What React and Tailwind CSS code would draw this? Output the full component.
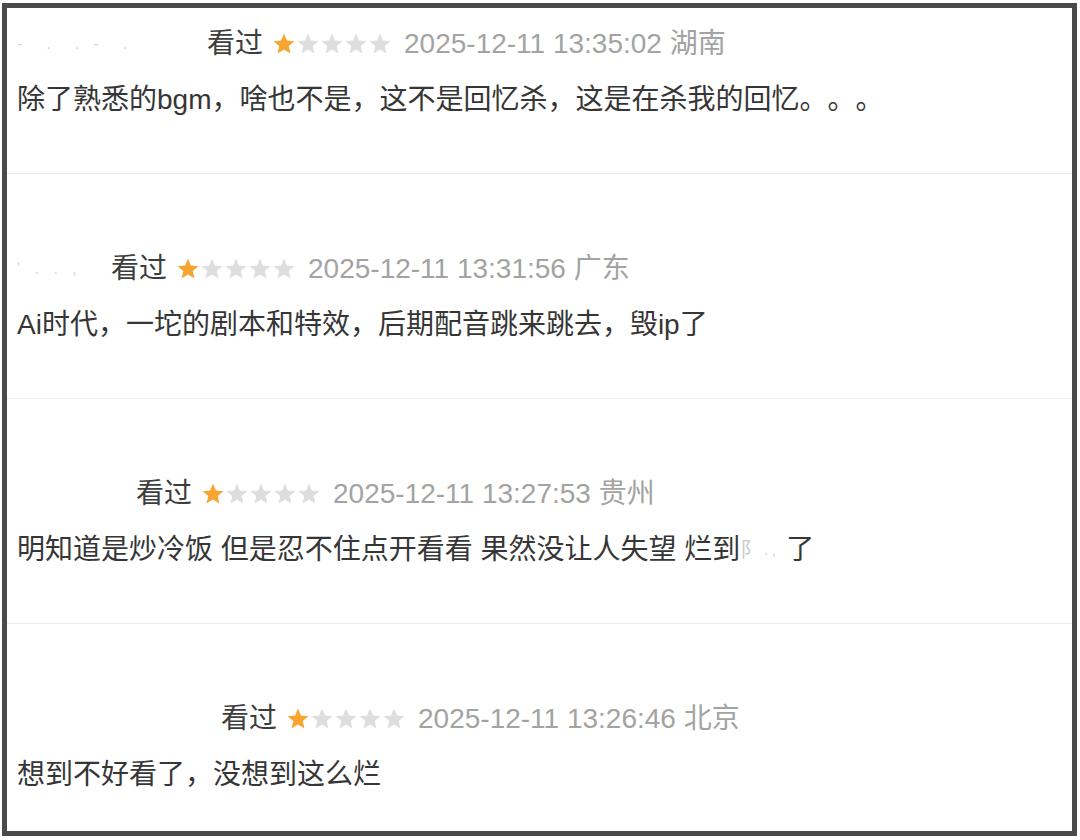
import React from "react";

// one-star review rows, usernames are blurred out in the source
const reviews = [
  {
    nameWidth: "w-[190px]",
    nameMarks: "-  .  . -  .",
    time: "2025-12-11 13:35:02",
    region: "湖南",
    text: "除了熟悉的bgm，啥也不是，这不是回忆杀，这是在杀我的回忆。。。",
    first: true,
  },
  {
    nameWidth: "w-[94px]",
    nameMarks: "' . . ,",
    time: "2025-12-11 13:31:56",
    region: "广东",
    text: "Ai时代，一坨的剧本和特效，后期配音跳来跳去，毁ip了",
  },
  {
    nameWidth: "w-[119px]",
    nameMarks: "",
    time: "2025-12-11 13:27:53",
    region: "贵州",
    text: null,
  },
  {
    nameWidth: "w-[204px]",
    nameMarks: "",
    time: "2025-12-11 13:26:46",
    region: "北京",
    text: "想到不好看了，没想到这么烂",
    last: true,
  },
];

const Star = ({ filled }) => (
  <svg viewBox="0 0 24 24" className="w-[24px] h-[24px]">
    <polygon
      points="12,1.5 14.9,8.6 22.5,9.2 16.7,14.1 18.5,21.6 12,17.6 5.5,21.6 7.3,14.1 1.5,9.2 9.1,8.6"
      fill={filled ? "#f7a530" : "#dedede"}
    />
  </svg>
);

const Stars = ({ count }) => (
  <div className="flex items-center ml-[9px]">
    {[0, 1, 2, 3, 4].map((i) => (
      <Star key={i} filled={i < count} />
    ))}
  </div>
);

const Review = ({ review }) => {
  return (
    <div
      className={
        (review.first ? "pt-[18px] " : "pt-[77px] ") +
        (review.last ? "flex-1 " : "pb-[55px] border-b border-[#ebebeb] ")
      }
    >
      <div className="flex items-center h-[36px] pl-[10px]">
        <span
          className={
            review.nameWidth +
            " text-[#d4d4d4] text-[16px] tracking-[5px] whitespace-pre"
          }
        >
          {review.nameMarks}
        </span>
        <span className="text-[#3d3d3d]">看过</span>
        <Stars count={1} />
        <span className="ml-[12px] text-[#a3a3a3]">
          {review.time} {review.region}
        </span>
      </div>
      <div className="mt-[20px] h-[36px] flex items-center pl-[10px] text-[#363636]">
        {review.text ? (
          review.text
        ) : (
          <>
            明知道是炒冷饭 但是忍不住点开看看 果然没让人失望 烂到
            <span className="inline-flex items-center w-[46px] text-[#cccccc]">
              <span className="text-[20px]">阝</span>
              <span className="text-[14px] ml-[4px]">. ,</span>
            </span>
            了
          </>
        )}
      </div>
    </div>
  );
};

const App = () => {
  return (
    <div className="w-[1080px] h-[840px] bg-white pt-[3px] pl-[2px] font-['Liberation_Sans','Noto_Sans_CJK_SC',sans-serif] text-[28px] leading-[36px] [text-spacing-trim:space-all]">
      <div className="w-[1075px] h-[833px] border-[5px] border-[#4a4a4a] flex flex-col">
        {reviews.map((r, i) => (
          <Review key={i} review={r} />
        ))}
      </div>
    </div>
  );
};

export default App;
